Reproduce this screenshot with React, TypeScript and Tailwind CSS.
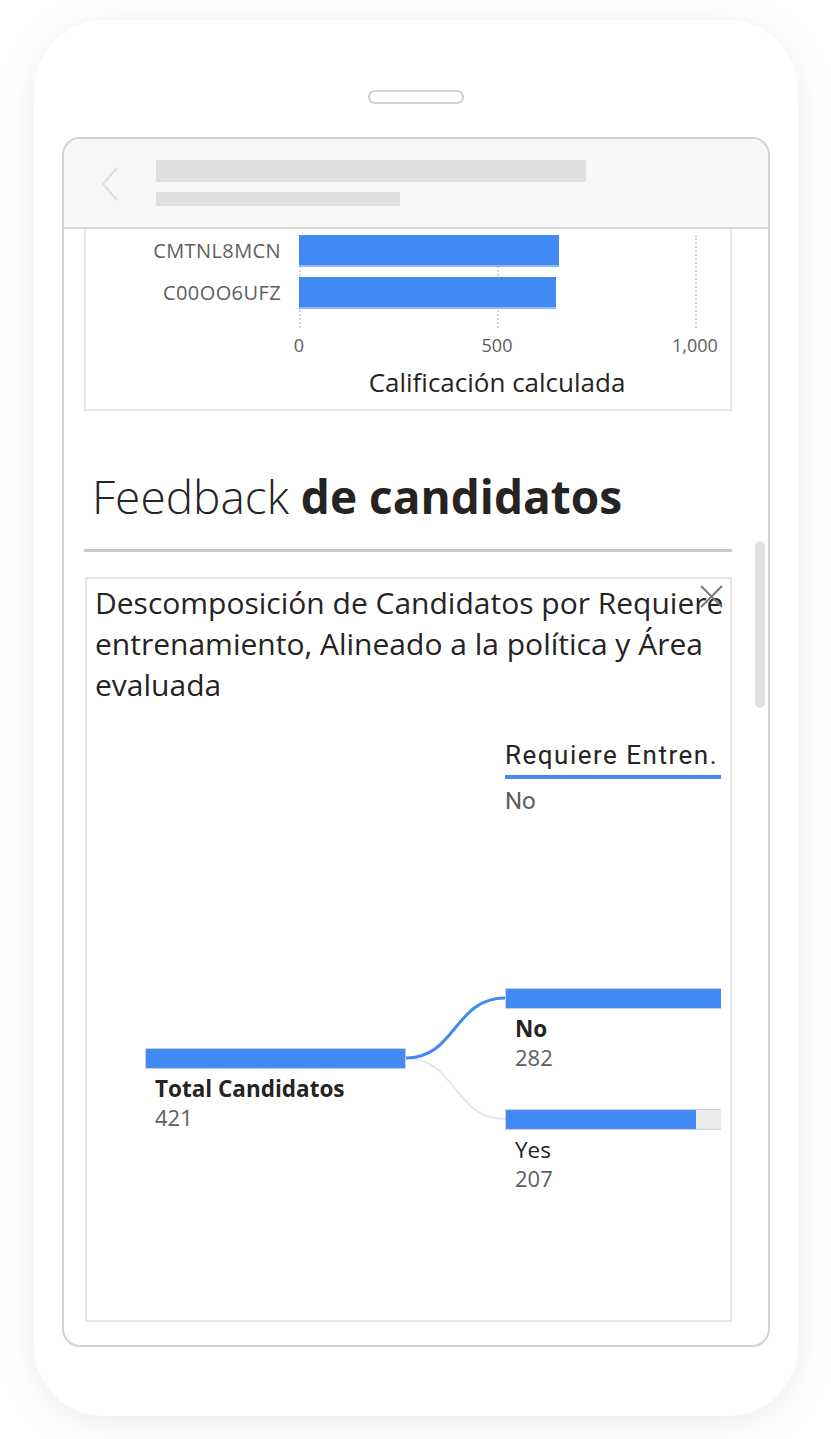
import React from "react";

const BLUE = "bg-[#4189f5]";

function Node({ label, value, pct, bold }: { label: string; value: string; pct: number; bold?: boolean }) {
  return (
    <div className="flex flex-col">
      <div className="w-[261px] h-[21px] bg-[#ebebeb] border border-[#cfcfcf] flex">
        <div className={`h-full ${BLUE}`} style={{ width: `${pct}%` }} />
      </div>
      <div className={`mt-[8px] pl-[10px] leading-[24px] text-[22.5px] text-[#252423] whitespace-nowrap ${bold ? "font-bold" : ""}`}>{label}</div>
      <div className="pl-[10px] leading-[32px] text-[22px] text-[#605e5c]">{value}</div>
    </div>
  );
}

export default function App() {
  return (
    <div className="w-[831px] h-[1439px] bg-white pt-[20px] pl-[34px] font-['Open_Sans',sans-serif] overflow-hidden">
      <div className="w-[764px] h-[1396px] rounded-[70px] bg-white shadow-[0_6px_40px_rgba(0,0,0,0.08)] flex flex-col items-center pt-[70px]">
        <div className="w-[96px] h-[14px] rounded-full border-2 border-[#d0d0d0]" />
        <div className="mt-[33px] w-[708px] h-[1210px] rounded-[18px] border-2 border-[#d2d2d2] overflow-hidden flex flex-col">
          {/* header */}
          <div className="h-[90px] shrink-0 bg-[#f8f7f6] border-b-2 border-[#d6d6d6] flex items-start">
            <svg className="ml-[37px] mt-[28px]" width="18" height="34" viewBox="0 0 18 34" fill="none">
              <polyline points="16,1 2,17 16,33" stroke="#dedcda" strokeWidth="2" />
            </svg>
            <div className="ml-[37px] mt-[21px] flex flex-col gap-[10px]">
              <div className="w-[430px] h-[22px] bg-[#e1dfdd]" />
              <div className="w-[244px] h-[14px] bg-[#e1dfdd]" />
            </div>
          </div>
          {/* content */}
          <div className="relative flex-1 overflow-hidden">
            {/* chart card (scrolled) */}
            <div className="-mt-[30px] ml-[20px] w-[648px] border-2 border-[#e6e6e6] pt-[34px] pb-[11px]">
              <div className="relative pb-[19px]">
                <div className="absolute left-[213px] top-0 bottom-0 border-l-2 border-dotted border-[#d4d4d4]" />
                <div className="absolute left-[411px] top-0 bottom-0 border-l-2 border-dotted border-[#d4d4d4]" />
                <div className="absolute left-[609px] top-0 bottom-0 border-l-2 border-dotted border-[#d4d4d4]" />
                <div className="relative flex flex-col gap-[10px]">
                  {[
                    ["CMTNL8MCN", 260],
                    ["C00OO6UFZ", 257],
                  ].map(([l, w]) => (
                    <div key={l as string} className="flex items-center h-[32px]">
                      <div className="w-[213px] pr-[18px] text-right text-[20px] tracking-[0.4px] text-[#605e5c] leading-none">{l}</div>
                      <div className={`h-[32px] ${BLUE} border-b-2 border-[#8fb8f5]`} style={{ width: `${w}px` }} />
                    </div>
                  ))}
                </div>
              </div>
              <div className="ml-[114px] grid grid-cols-[198px_198px_198px] h-[34px] items-center text-center text-[18px] text-[#605e5c]">
                <div>0</div>
                <div>500</div>
                <div>1,000</div>
              </div>
              <div className="mt-[4px] ml-[114px] w-[594px] h-[32px] flex items-center justify-center text-[26px] text-[#252423]">
                Calificación calculada
              </div>
            </div>

            {/* heading */}
            <div className="mt-[57px] ml-[28px] text-[46px] leading-[56px] text-[#252423] whitespace-nowrap">
              <span className="font-light">Feedback </span>
              <span className="font-bold">de candidatos</span>
            </div>
            <div className="mt-[25px] ml-[20px] w-[648px] h-[3px] bg-[#c8c8c8]" />

            {/* decomposition card */}
            <div className="relative mt-[25px] ml-[21px] w-[647px] h-[745px] border-2 border-[#e6e6e6] overflow-hidden">
              <div className="pt-[3px] pl-[8px] text-[30px] leading-[41px] text-[#252423] whitespace-nowrap">
                <div>Descomposición de Candidatos por Requiere</div>
                <div>entrenamiento, Alineado a la política y Área</div>
                <div>evaluada</div>
              </div>
              <svg className="absolute right-[7px] top-[6px]" width="23" height="23" viewBox="0 0 23 23">
                <path d="M1 1 L22 22 M22 1 L1 22" stroke="#7a7a7a" strokeWidth="2" />
              </svg>
              <div className="flex items-start">
                <div className="ml-[58px] pt-[343px]">
                  <Node label="Total Candidatos" value="421" pct={100} bold />
                </div>
                <svg className="mt-[285px] shrink-0" width="99" height="140" viewBox="0 0 99 140">
                  <path d="M0 68 C50 68 48 129 99 129" stroke="#e6e6e6" strokeWidth="2" fill="none" />
                  <path d="M0 68 C50 68 48 8 99 8" stroke="#4189f5" strokeWidth="3" fill="none" />
                </svg>
                <div className="w-[216px] overflow-hidden pt-[35px] shrink-0">
                  <div className="h-[30px] leading-[30px] text-[26px] tracking-[1.5px] text-[#252423] font-['Roboto',sans-serif] whitespace-nowrap">
                    Requiere Entren.
                  </div>
                  <div className="mt-[5px] h-[4px] w-[261px] bg-[#4189f5]" />
                  <div className="mt-[10px] h-[24px] leading-[24px] text-[24px] text-[#605e5c] font-['Roboto',sans-serif]">No</div>
                  <div className="mt-[175px]">
                    <Node label="No" value="282" pct={100} bold />
                  </div>
                  <div className="mt-[36px]">
                    <Node label="Yes" value="207" pct={73.4} />
                  </div>
                </div>
              </div>
            </div>

            {/* scrollbar */}
            <div className="absolute right-[3px] top-[312px] w-[10px] h-[167px] rounded-full bg-[#e1e1e1]" />
          </div>
        </div>
      </div>
    </div>
  );
}
